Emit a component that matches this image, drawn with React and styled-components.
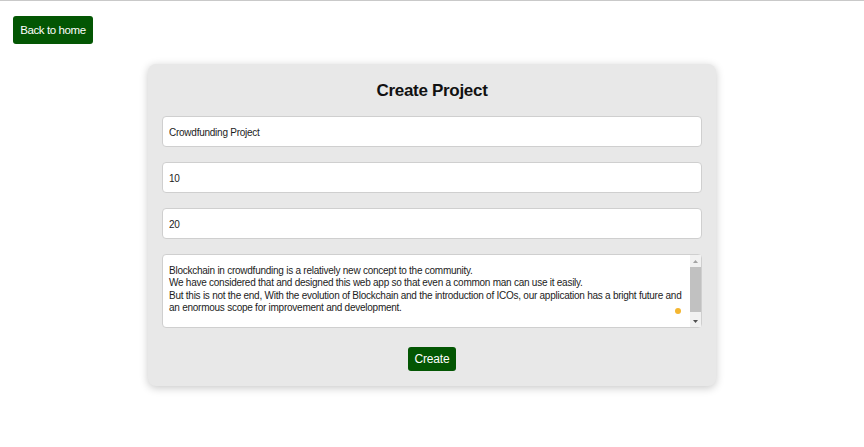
import React, { useState } from "react";
import styled, { createGlobalStyle } from "styled-components";

const GlobalStyle = createGlobalStyle`
  html, body {
    margin: 0;
    padding: 0;
    background: #ffffff;
    font-family: "Liberation Sans", Arial, sans-serif;
  }
`;

const Page = styled.div`
  min-height: 447px;
  border-top: 1px solid #c9c9c9;
  box-sizing: border-box;
  padding-top: 15px;
`;

const GreenButton = styled.button`
  display: flex;
  align-items: center;
  justify-content: center;
  box-sizing: border-box;
  width: ${(p) => p.$w}px;
  height: ${(p) => p.$h}px;
  padding: 0;
  border: none;
  border-radius: 3px;
  background: #035603;
  color: #ffffff;
  font-family: inherit;
  font-size: ${(p) => p.$fs}px;
  letter-spacing: ${(p) => p.$ls}px;
  cursor: pointer;
`;

const BackButton = styled(GreenButton)`
  margin-left: 13px;
`;

const Card = styled.div`
  width: 568px;
  box-sizing: border-box;
  margin: 20px auto 0;
  padding: 14px 14px 15px;
  background: #e8e8e8;
  border-radius: 8px;
  box-shadow: 0 2px 8px rgba(0, 0, 0, 0.22);
  display: flex;
  flex-direction: column;
  align-items: center;
`;

const Title = styled.h2`
  margin: 0 0 14px;
  height: 24px;
  line-height: 25px;
  font-size: 17px;
  letter-spacing: -0.3px;
  font-weight: bold;
  color: #111111;
`;

const Fields = styled.div`
  align-self: stretch;
  display: flex;
  flex-direction: column;
  gap: 15px;
`;

const Input = styled.input`
  height: 31px;
  box-sizing: border-box;
  padding: 2px 6px 0;
  border: 1px solid #cfcfcf;
  border-radius: 4px;
  background: #ffffff;
  color: #1c1c1c;
  font-family: inherit;
  font-size: 10px;
  letter-spacing: -0.25px;
  outline: none;
`;

const AreaWrap = styled.div`
  position: relative;
`;

const TextArea = styled.textarea`
  display: block;
  width: 100%;
  height: 74px;
  box-sizing: border-box;
  padding: 10px 17px 10px 6px;
  border: 1px solid #cfcfcf;
  border-radius: 4px;
  background: #ffffff;
  color: #1c1c1c;
  font-family: inherit;
  font-size: 10px;
  letter-spacing: -0.25px;
  line-height: 12.3px;
  resize: none;
  outline: none;
  overflow-y: auto;
  scrollbar-width: none;
`;

const ScrollBar = styled.div`
  position: absolute;
  top: 1px;
  right: 1px;
  bottom: 1px;
  width: 11px;
  background: #f1f1f1;
  display: flex;
  flex-direction: column;
`;

const Arrow = styled.div`
  height: 12px;
  display: flex;
  align-items: center;
  justify-content: center;
`;

const Thumb = styled.div`
  height: 45px;
  margin-bottom: auto;
  background: #c1c1c1;
`;

const Dot = styled.span`
  position: absolute;
  right: 21px;
  bottom: 14px;
  width: 6px;
  height: 6px;
  border-radius: 50%;
  background: #f4b630;
`;

const CreateButton = styled(GreenButton)`
  margin-top: 19px;
`;

const description =
  "Blockchain in crowdfunding is a relatively new concept to the community.\n" +
  "We have considered that and designed this web app so that even a common man can use it easily.\n" +
  "But this is not the end, With the evolution of Blockchain and the introduction of ICOs, our application has a bright future and an enormous scope for improvement and development.";

export default function App() {
  const [form, setForm] = useState({
    name: "Crowdfunding Project",
    goal: "10",
    days: "20",
    description,
  });

  const handleInput = (e) => setForm({ ...form, [e.target.name]: e.target.value });

  return (
    <Page>
      <GlobalStyle />
      <BackButton $w={80} $h={28} $fs={11.5} $ls={-0.4}>
        Back to home
      </BackButton>
      <Card>
        <Title>Create Project</Title>
        <Fields>
          <Input name="name" value={form.name} onChange={handleInput} />
          <Input name="goal" value={form.goal} onChange={handleInput} />
          <Input name="days" value={form.days} onChange={handleInput} />
          <AreaWrap>
            <TextArea
              name="description"
              value={form.description}
              onChange={handleInput}
            />
            <ScrollBar>
              <Arrow>
                <svg width="5" height="3" viewBox="0 0 5 3">
                  <path d="M0 3 L2.5 0 L5 3 Z" fill="#a3a3a3" />
                </svg>
              </Arrow>
              <Thumb />
              <Arrow>
                <svg width="5" height="3" viewBox="0 0 5 3">
                  <path d="M0 0 L5 0 L2.5 3 Z" fill="#505050" />
                </svg>
              </Arrow>
            </ScrollBar>
            <Dot />
          </AreaWrap>
        </Fields>
        <CreateButton $w={48} $h={24} $fs={12} $ls={-0.2}>
          Create
        </CreateButton>
      </Card>
    </Page>
  );
}
